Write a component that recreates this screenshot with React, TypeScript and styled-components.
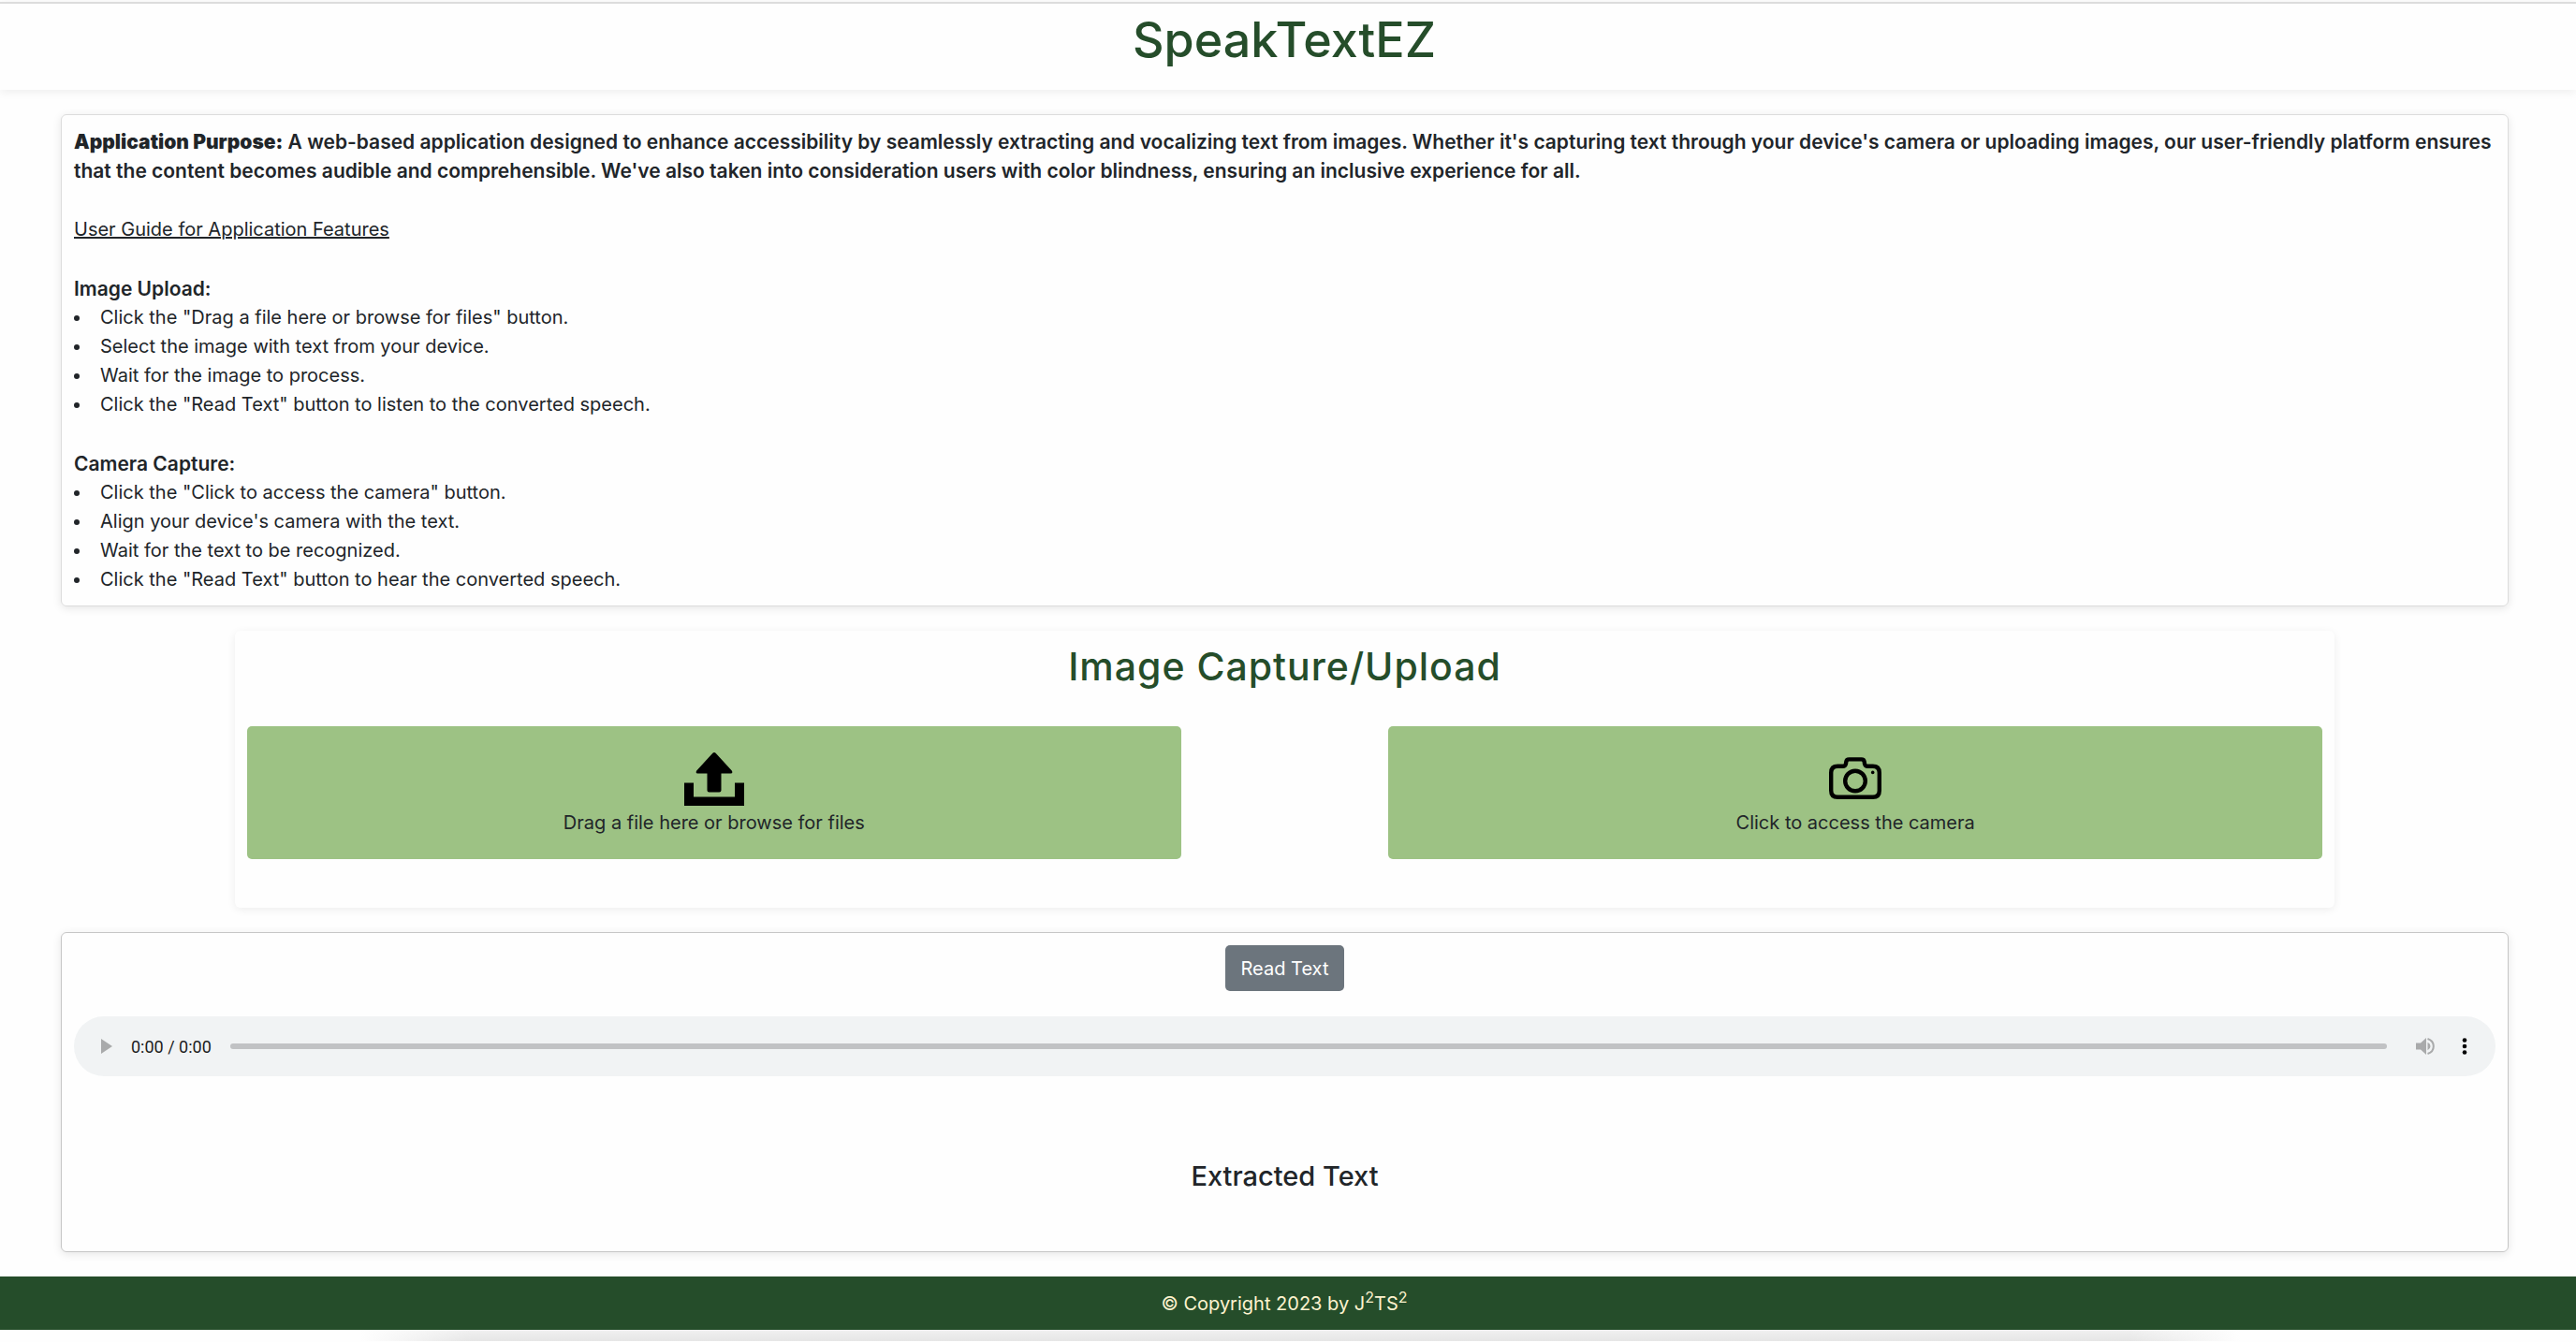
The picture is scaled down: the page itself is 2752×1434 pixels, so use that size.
import React from "react";
import styled, { createGlobalStyle, css } from "styled-components";

const green = "#254d2a";

const GlobalStyle = createGlobalStyle`
  *, *::before, *::after { box-sizing: border-box; }
  body {
    margin: 0;
    background: #fefefe;
    color: #212529;
    font-family: Inter, "Liberation Sans", sans-serif;
    font-size: 20px;
    line-height: 31px;
  }
  h1, h2, h3, p, ul { margin: 0; font-weight: inherit; font-size: inherit; }
  button, input { font: inherit; color: inherit; }
`;

const Header = styled.header`
  margin-top: 2px;
  padding: 8px 8px 22px 0;
  border-top: 2px solid #dcdcdc;
  text-align: center;
  box-shadow: 0 2px 10px rgba(0, 0, 0, 0.07);
`;

const Brand = styled.h1`
  color: ${green};
  font-size: 52px;
  font-weight: 500;
  line-height: 62px;
`;

const Main = styled.main`
  display: flex;
  flex-direction: column;
  gap: 26px;
  padding: 26px 72px 26px 65px;
`;

const Card = styled.section<{ $border?: string }>`
  border-radius: 6px;
  box-shadow: 0 2px 10px rgba(0, 0, 0, 0.1);
  padding: 13px;
  ${({ $border }) => $border && css`border: 1px solid ${$border};`}
`;

const Guide = styled(Card)`
  display: flex;
  flex-direction: column;
  gap: 32px;
  padding: 13px 13px 12px;
`;

const Purpose = styled.p`
  font-size: 21px;
  font-weight: 600;
`;

const Strong = styled.strong`
  font-weight: 900;
`;

const GuideTitle = styled.h2`
  text-decoration: underline;
`;

const StepsTitle = styled.h3`
  font-size: 21px;
  font-weight: 600;
`;

const Steps = styled.ul`
  padding: 0;
  list-style: none;
`;

const Step = styled.li`
  display: flex;
  align-items: center;
  gap: 22px;

  &::before {
    content: "";
    width: 6px;
    height: 6px;
    border-radius: 50%;
    background: currentColor;
  }
`;

const Capture = styled(Card)`
  margin: 0 186px;
  padding-bottom: 52px;
  box-shadow: 0 2px 10px rgba(0, 0, 0, 0.07);
`;

const CaptureTitle = styled.h2`
  margin-bottom: 39px;
  color: ${green};
  font-size: 41px;
  font-weight: 500;
  letter-spacing: 1px;
  line-height: 50px;
  text-align: center;
`;

const Options = styled.div`
  display: flex;
  justify-content: space-between;
`;

const optionStyle = css`
  display: flex;
  flex-direction: column;
  align-items: center;
  gap: 3px;
  width: 45%;
  padding: 25px 13px 23px;
  border: 0;
  border-radius: 5px;
  background: #9dc284;
  cursor: pointer;
`;

const UploadOption = styled.label`
  ${optionStyle}
`;

const CameraOption = styled.button`
  ${optionStyle}
`;

const FileInput = styled.input`
  display: none;
`;

const OptionIcon = styled.svg`
  width: 64px;
  height: 60px;
  color: #000;
`;

const Result = styled(Card)`
  display: flex;
  flex-direction: column;
  align-items: center;
`;

const ReadButton = styled.button`
  padding: 10px 17px 8px;
  border: 0;
  border-radius: 5px;
  background: #6c757d;
  color: #fff;
  cursor: pointer;
`;

const Player = styled.div`
  display: flex;
  align-items: center;
  align-self: stretch;
  height: 64px;
  margin: 27px 0 88px;
  padding: 0 20px;
  border-radius: 32px;
  background: #f1f3f4;
`;

const PlayerButton = styled.button`
  display: flex;
  padding: 0;
  border: 0;
  background: none;
  color: #a9aaab;
`;

const Time = styled.span`
  margin: 0 20px 0 11px;
  color: #1c1c1c;
  font-family: Roboto, "Liberation Sans", sans-serif;
  font-size: 18px;
`;

const Seek = styled.input`
  flex: 1;
  appearance: none;
  height: 6px;
  margin: 0 24px 0 0;
  border-radius: 3px;
  background: #c1c2c4;

  &::-webkit-slider-thumb {
    appearance: none;
    width: 0;
    height: 0;
  }
`;

const PlayerTools = styled.div`
  display: flex;
  gap: 14px;
`;

const ResultTitle = styled.h2`
  margin-bottom: 48px;
  font-size: 29px;
  font-weight: 500;
  line-height: 38px;
`;

const Footer = styled.footer`
  padding: 14px 8px 12px 0;
  background: ${green};
  color: #fdf3cf;
  text-align: center;
`;

const Sup = styled.sup`
  font-size: 16px;
  line-height: 0;
`;

const BottomShade = styled.div`
  height: 12px;
  margin: 0 13% 0 14%;
  background:
    linear-gradient(90deg, #fefefe, transparent 6%, transparent 94%, #fefefe),
    linear-gradient(#f0f0f0, #e6e6e6);
`;

const uploadSteps = [
  'Click the "Drag a file here or browse for files" button.',
  "Select the image with text from your device.",
  "Wait for the image to process.",
  'Click the "Read Text" button to listen to the converted speech.',
];

const cameraSteps = [
  'Click the "Click to access the camera" button.',
  "Align your device's camera with the text.",
  "Wait for the text to be recognized.",
  'Click the "Read Text" button to hear the converted speech.',
];

function StepList({ title, steps }: { title: string; steps: string[] }) {
  return (
    <div>
      <StepsTitle>{title}</StepsTitle>
      <Steps>
        {steps.map((step) => (
          <Step key={step}>{step}</Step>
        ))}
      </Steps>
    </div>
  );
}

function UploadIcon() {
  return (
    <OptionIcon viewBox="0 0 64 60" fill="currentColor" aria-hidden="true">
      <path d="M30.4 3.8Q32 2.2 33.6 3.8L50.8 22.6Q52.4 25.6 49.5 25.6H39.5V43.5Q39.5 45.6 37.4 45.6H26.6Q24.5 45.6 24.5 43.5V25.6H14.5Q11.6 25.6 13.2 22.6Z" />
      <path d="M0 35.5H10V50.5H54V35.5H64V60H0Z" />
    </OptionIcon>
  );
}

function CameraIcon() {
  return (
    <OptionIcon viewBox="0 0 64 60" fill="none" stroke="currentColor" strokeWidth="4.4" strokeLinejoin="round" aria-hidden="true">
      <path d="M13.2 17.8H18.6Q21.6 17.8 22 15L22.3 13Q22.7 10.4 25.4 10.4H38.6Q41.3 10.4 41.7 13L42 15Q42.4 17.8 45.4 17.8H50.8Q57.8 17.8 57.8 24.8V43.8Q57.8 50.8 50.8 50.8H13.2Q6.2 50.8 6.2 43.8V24.8Q6.2 17.8 13.2 17.8Z" />
      <circle cx="32" cy="33.5" r="10.8" />
      <circle cx="50.7" cy="24.4" r="1.8" fill="currentColor" stroke="none" />
    </OptionIcon>
  );
}

export default function App() {
  return (
    <>
      <GlobalStyle />
      <Header>
        <Brand>SpeakTextEZ</Brand>
      </Header>
      <Main>
        <Guide $border="#dcdcdc">
          <Purpose>
            <Strong>Application Purpose:</Strong> A web-based application designed to enhance
            accessibility by seamlessly extracting and vocalizing text from images. Whether it's
            capturing text through your device's camera or uploading images, our user-friendly
            platform ensures that the content becomes audible and comprehensible. We've also taken
            into consideration users with color blindness, ensuring an inclusive experience for all.
          </Purpose>
          <GuideTitle>User Guide for Application Features</GuideTitle>
          <StepList title="Image Upload:" steps={uploadSteps} />
          <StepList title="Camera Capture:" steps={cameraSteps} />
        </Guide>

        <Capture>
          <CaptureTitle>Image Capture/Upload</CaptureTitle>
          <Options>
            <UploadOption htmlFor="image-file">
              <UploadIcon />
              Drag a file here or browse for files
              <FileInput id="image-file" type="file" accept="image/*" />
            </UploadOption>
            <CameraOption type="button">
              <CameraIcon />
              Click to access the camera
            </CameraOption>
          </Options>
        </Capture>

        <Result $border="#c6c6c6">
          <ReadButton type="button">Read Text</ReadButton>
          <Player>
            <PlayerButton type="button" aria-label="Play">
              <svg width="30" height="30" viewBox="0 0 30 30" fill="currentColor">
                <path d="M9 7V23L21 15Z" />
              </svg>
            </PlayerButton>
            <Time>0:00 / 0:00</Time>
            <Seek type="range" min="0" max="100" defaultValue="0" aria-label="Seek" />
            <PlayerTools>
              <PlayerButton type="button" aria-label="Mute">
                <svg width="32" height="32" viewBox="0 0 32 32" fill="currentColor">
                  <path d="M7 12.5H12L18 7V25L12 19.5H7Z" />
                  <path d="M19.5 11.7Q22.5 13.3 22.5 16T19.5 20.3Z" />
                  <path d="M19.5 8Q25.8 10 25.8 16T19.5 24" fill="none" stroke="currentColor" strokeWidth="2" />
                </svg>
              </PlayerButton>
              <PlayerButton type="button" aria-label="More options">
                <svg width="26" height="32" viewBox="0 0 26 32" fill="#000">
                  <circle cx="13" cy="9.5" r="2.3" />
                  <circle cx="13" cy="16" r="2.3" />
                  <circle cx="13" cy="22.5" r="2.3" />
                </svg>
              </PlayerButton>
            </PlayerTools>
          </Player>
          <ResultTitle>Extracted Text</ResultTitle>
        </Result>
      </Main>
      <Footer>
        © Copyright 2023 by J<Sup>2</Sup>TS<Sup>2</Sup>
      </Footer>
      <BottomShade />
    </>
  );
}
